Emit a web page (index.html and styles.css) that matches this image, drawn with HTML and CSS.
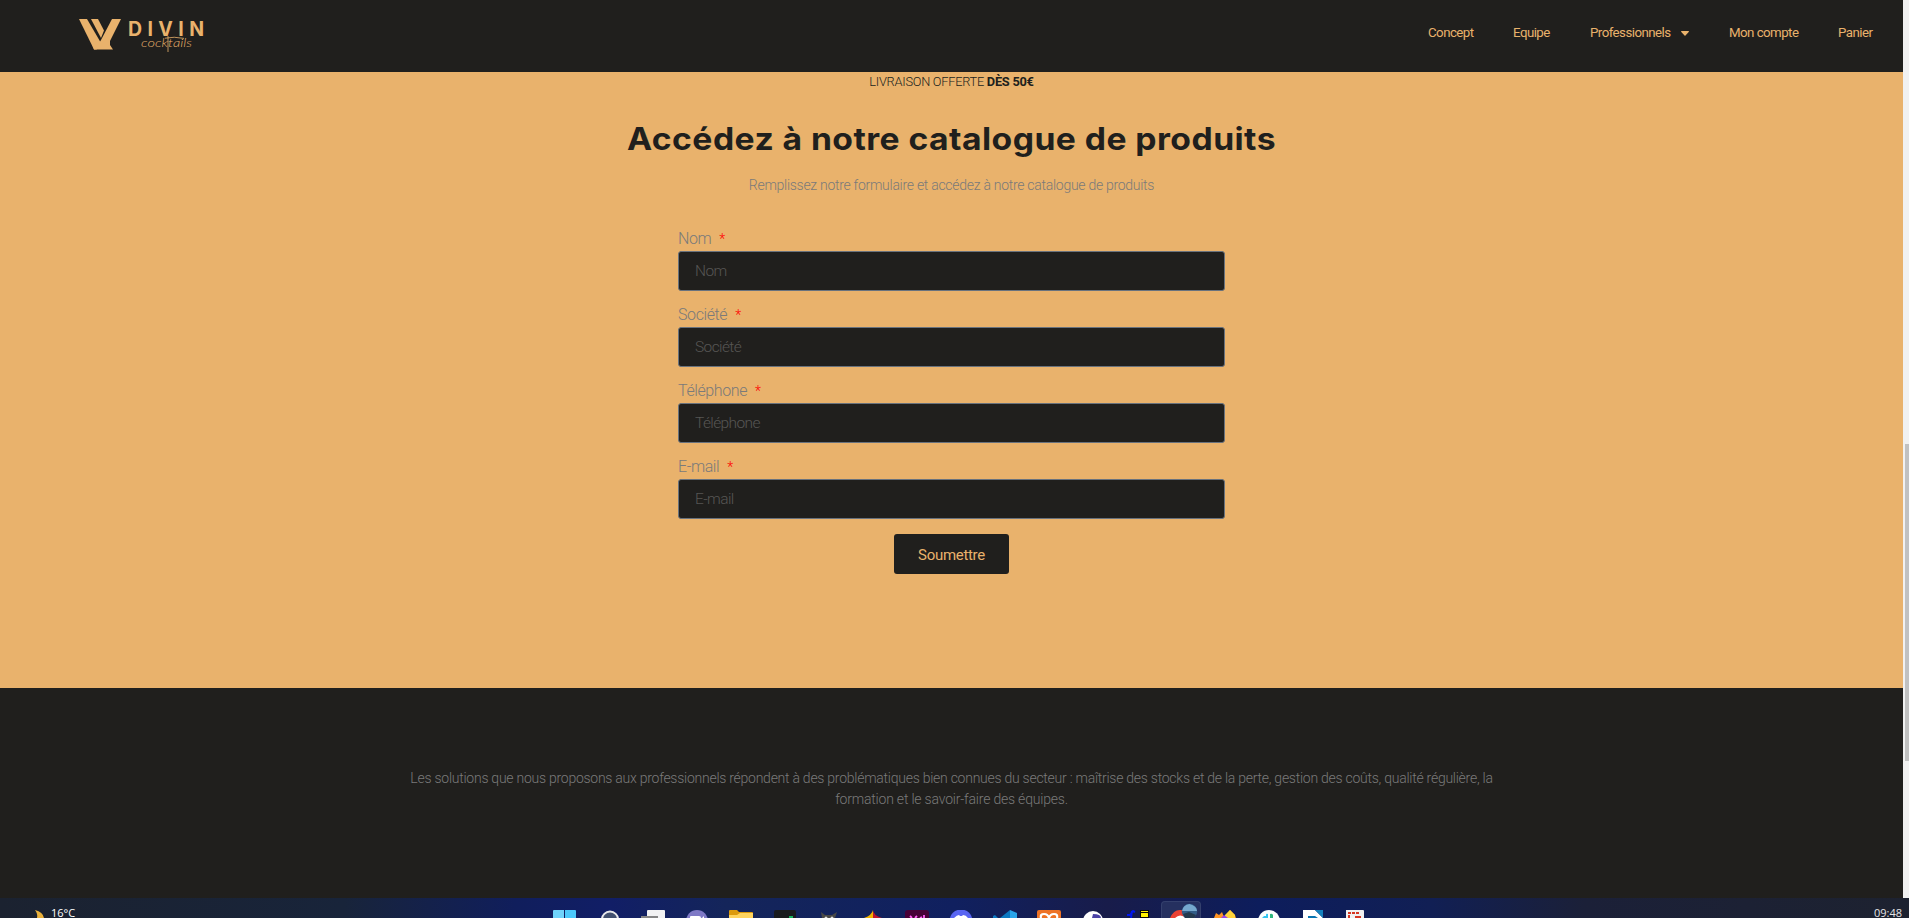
FILE: index.html
```html
<!DOCTYPE html>
<html lang="fr">
<head>
<meta charset="utf-8">
<title>Divin cocktails</title>
<link rel="stylesheet" href="styles.css">
</head>
<body>
<div class="browser">
  <div class="page">
    <header class="header">
      <svg class="logo" width="130" height="44" viewBox="0 0 130 44" fill="#e9b26c">
        <path d="M0 5H8L22 29V31L17.500 35.500H15Z"/>
        <path d="M12 5H19L25 16.500L22 24Z"/>
        <path d="M33 5H42L31 27V31L34 35.500H15L14 32L19 31L22 26Z"/>
        <text class="logo-name" x="49" y="22" textLength="76">DIVIN</text>
        <text class="logo-sub" x="62" y="32.500" textLength="51" lengthAdjust="spacingAndGlyphs">cocktails</text>
        <path d="M86 24.200Q95 22.200 105 24.400" fill="none" stroke="#e9b26c" stroke-width=".8"/>
        <path d="M89 22V38" fill="none" stroke="#e9b26c" stroke-width=".8"/>
      </svg>
      <nav class="nav">
        <a class="n1">Concept</a>
        <a class="n2">Equipe</a>
        <a class="n3"><span>Professionnels</span><svg width="8" height="5" viewBox="0 0 8 5"><path d="M.5 0H7.500Q8.300.4 7.700 1L4.500 4.600Q4 5 3.500 4.600L.3 1Q-.3.4.5 0Z" fill="#e9b26c"/></svg></a>
        <a class="n4">Mon compte</a>
        <a class="n5">Panier</a>
      </nav>
    </header>
    <main class="catalogue">
      <p class="shipping"><span>LIVRAISON OFFERTE</span> <b>DÈS 50€</b></p>
      <h1 class="title">Accédez à notre catalogue de produits</h1>
      <p class="intro">Remplissez notre formulaire et accédez à notre catalogue de produits</p>
      <form class="form">
        <label class="label"><span>Nom</span><i>*</i></label>
        <input class="field" placeholder="Nom">
        <label class="label"><span>Société</span><i>*</i></label>
        <input class="field" placeholder="Société">
        <label class="label"><span>Téléphone</span><i>*</i></label>
        <input class="field" placeholder="Téléphone">
        <label class="label"><span>E-mail</span><i>*</i></label>
        <input class="field" placeholder="E-mail">
        <button class="submit" type="button">Soumettre</button>
      </form>
    </main>
    <section class="solutions">
      <p class="line1">Les solutions que nous proposons aux professionnels répondent à des problématiques bien connues du secteur : maîtrise des stocks et de la perte, gestion des coûts, qualité régulière, la</p>
      <p class="line2">formation et le savoir-faire des équipes.</p>
    </section>
  </div>
  <div class="scrollbar"><div class="thumb"></div></div>
</div>
<footer class="taskbar">
  <div class="weather">
    <svg width="10" height="8" viewBox="0 0 10 8"><path d="M0 0Q8 2 9 8H2Q3 4 0 0Z" fill="#e9b13c"/></svg>
    <span>16°C</span>
  </div>
  <div class="apps">
    <svg viewBox="0 0 24 8"><path d="M0 1Q0 0 1 0H11V8H0Z" fill="#6fd3fb"/><path d="M12 0H22Q23 0 23 1V8H12Z" fill="#4cc8fa"/></svg>
    <svg viewBox="0 0 24 8"><circle cx="13" cy="9.500" r="8" fill="#42506f" stroke="#e8e8ea" stroke-width="2"/></svg>
    <svg viewBox="0 0 24 8"><path d="M7 0H23Q24 0 24 1V8H6V1Q6 0 7 0Z" fill="#f2f2f3"/><path d="M0 6H17V8H0Z" fill="#858585"/></svg>
    <svg viewBox="0 0 24 8"><circle cx="12" cy="11" r="11" fill="#7e79c6"/><path d="M5 8V7Q5 6 6 6H14Q16 6 16 8Z" fill="#fff"/><path d="M17 8L19 6V8Z" fill="#fff"/></svg>
    <svg viewBox="0 0 24 8"><path d="M0 8V1Q0 0 1 0H8L10 2H23Q24 2 24 3V8Z" fill="#dc9a0c"/><path d="M0 5H8L11 3H24V8H0Z" fill="#ffd45e"/></svg>
    <svg viewBox="0 0 24 8"><path d="M1 2Q1 0 3 0H21Q23 0 23 2V8H1Z" fill="#191b1d"/><path d="M16 8V6H20V8Z" fill="#19b25d"/></svg>
    <svg viewBox="0 0 24 8"><path d="M4 2L8 5H15L20 2L18 8H5Z" fill="#484846"/><circle cx="9" cy="8" r="1.500" fill="#ddd"/><circle cx="15" cy="8" r="1.500" fill="#ddd"/></svg>
    <svg viewBox="0 0 24 8"><path d="M12 0Q11 5 3 8H12Z" fill="#f3b400"/><path d="M12 0Q12 5 21 8H12Z" fill="#bd172e"/></svg>
    <svg viewBox="0 0 24 8"><path d="M0 3Q0 0 3 0H21Q24 0 24 3V8H0Z" fill="#470137"/><path d="M5 6L7 8M12 6L10 8M19 5V8M15 8L17 7" stroke="#ff61f6" stroke-width="1.800"/></svg>
    <svg viewBox="0 0 24 8"><circle cx="12" cy="11" r="11.500" fill="#5865f2"/><path d="M5 8Q8 5 10 5L11 6H13L14 5Q17 5 19 8Z" fill="#fff"/></svg>
    <svg viewBox="0 0 24 8"><path d="M7 8L17 0L19 8Z" fill="#0c78c1"/><path d="M17 0L24 3V8H17Z" fill="#2aa5ea"/><path d="M0 6L2 5L5 8H0Z" fill="#0c78c1"/></svg>
    <svg viewBox="0 0 24 8"><path d="M0 2Q0 0 2 0H22Q24 0 24 2V8H0Z" fill="#ee7325"/><path d="M4 8Q3 4 7 4Q11 4 12 8Q13 4 17 4Q21 4 20 8" fill="none" stroke="#fff" stroke-width="2.200"/></svg>
    <svg viewBox="0 0 24 8"><circle cx="12" cy="11" r="10" fill="#fff"/><path d="M12 4Q20 4 20 8H11Z" fill="#4b42a5"/></svg>
    <svg viewBox="0 0 24 8"><path d="M2 5H5L8 1L10 2M7 1L6 8" stroke="#0016ee" stroke-width="2" fill="none"/><path d="M15 0H24V8H15Z" fill="#050505"/><path d="M16 1H23V2H16ZM16 3H23V7H16Z" fill="#fff100"/></svg>
    <span class="active-app"><svg viewBox="0 0 40 17"><path d="M9 17Q13 8 20 9Q28 10 30 17Z" fill="#e94133"/><path d="M14 17Q19 12 25 17Z" fill="#fff"/><circle cx="28.500" cy="10.500" r="7.700" fill="#315c87"/><path d="M21 10H36Q36 5 28.500 3Q22 4 21 10Z" fill="#76a8cd"/><path d="M22 13L28 11L35 14L33 17H24Z" fill="#23394d"/></svg></span>
    <svg viewBox="0 0 24 8"><path d="M1 8L3 3L6 5L9 2L11 7L17 0L22 5L23 8Z" fill="#ff9524"/><path d="M12 5L17 0L22 5V8H12Z" fill="#ffd43a"/><path d="M8 8L11 5L15 8Z" fill="#9b45e9"/></svg>
    <svg viewBox="0 0 24 8"><circle cx="12" cy="11" r="11" fill="#fff"/><path d="M9 8V5Q9 3 11 4V8Z" fill="#36c5f0"/><path d="M13 8V4Q15 3 16 5V8Z" fill="#2eb67d"/><path d="M5 8H10V6H7Z" fill="#36c5f0"/></svg>
    <svg viewBox="0 0 24 8"><path d="M2 0H14L22 8H2Z" fill="#fff"/><path d="M14 0H22V8Z" fill="#1482be"/><path d="M7 8V6H14L17 8Z" fill="#0874b0"/></svg>
    <svg viewBox="0 0 24 8"><path d="M1 0H18Q19 0 19 1V8H1Z" fill="#f1f1f1"/><path d="M4 8V3H13V5" stroke="#d63622" stroke-width="2" stroke-dasharray="3 1" fill="none"/><path d="M10 6H16V8H10Z" fill="#d63622"/></svg>
  </div>
  <time class="clock">09:48</time>
</footer>
</body>
</html>
```
FILE: styles.css
```css
* { box-sizing: border-box; margin: 0; padding: 0; }
body { width: 1909px; height: 918px; overflow: hidden; font-family: Roboto, sans-serif; background: #201f1d; }
.browser { display: flex; height: 898px; }
.page { width: 1903px; }
.header { height: 72px; background: #201f1d; display: flex; justify-content: space-between; padding: 14px 30px 0 79px; }
.logo-name { font: 700 19.500px Inter, sans-serif; }
.logo-sub { font: italic 300 12px Lato, sans-serif; }
.nav { display: flex; gap: 40px; height: 38px; align-items: center; font-size: 13.300px; line-height: 20px; color: #e9b26c; letter-spacing: -.55px; }
.nav a { display: flex; align-items: center; white-space: nowrap; }
.n1 { width: 45px; }
.n2 { width: 37px; }
.n3 { width: 99px; gap: 10px; }
.n4 { width: 69px; }
.n5 { width: 35px; }
.n3 span { width: 81px; }
.catalogue { height: 616px; background: #e9b26c; display: flex; flex-direction: column; align-items: center; }
.shipping { height: 20px; line-height: 20px; font-size: 12.800px; font-weight: 350; color: #201f1d; letter-spacing: -.25px; }
.shipping b { font-weight: 700; }
.title { margin-top: 27px; font: 700 31px/40px Inter, sans-serif; color: #201f1d; white-space: nowrap; letter-spacing: .4px; transform: scaleX(1.087); }
.intro { margin-top: 16px; line-height: 21px; font-size: 14px; font-weight: 350; color: #7a7a7a; letter-spacing: -.28px; }
.form { width: 547px; margin-top: 31px; display: flex; flex-direction: column; }
.label { height: 24px; display: flex; gap: 8px; font-size: 16px; font-weight: 350; line-height: 24px; color: #7a7a7a; letter-spacing: -.4px; }
.label i { font-style: normal; color: #f00; font-size: 14px; }
.field { width: 547px; height: 40px; margin-bottom: 12px; padding: 0 16px; border: 1px solid #69727d; border-radius: 3px; background: #201f1d; font: 350 15.500px Roboto, sans-serif; letter-spacing: -.6px; }
.field::placeholder { color: #575654; opacity: 1; }
.submit { align-self: center; width: 115px; height: 40px; margin-top: 3px; padding-top: 2px; border: 0; border-radius: 3px; background: #201f1d; color: #e9b26c; font: 400 15px Roboto, sans-serif; letter-spacing: -.3px; }
.solutions { padding-top: 80px; text-align: center; font-size: 14px; font-weight: 350; line-height: 21px; color: #7a7a7a; white-space: nowrap; }
.line1 { letter-spacing: -.257px; }
.line2 { letter-spacing: -.2px; }
.scrollbar { width: 6px; padding: 444px 0 0 2px; background: #f1f1f1; }
.thumb { height: 317px; background: #c1c1c1; }
.taskbar { height: 20px; display: flex; justify-content: space-between; overflow: hidden; background: linear-gradient(90deg, #1b2230 0, #18243a 18%, #101e5c 27%, #111e66 32%, #14255a 38%, #10205f 50%, #181c4a 58%, #0d1d5c 66%, #111f54 75%, #1b2038 83%, #1d2230 100%); }
.weather { width: 553px; padding: 6px 0 0 35px; display: flex; gap: 6px; }
.weather svg { margin-top: 6px; }
.weather span { font: 11px/18px "Open Sans", sans-serif; color: #fff; }
.apps { width: 812px; display: flex; gap: 20px; padding-top: 12px; }
.apps > svg { width: 24px; height: 8px; flex: none; }
.active-app { width: 40px; height: 17px; margin: -9px -8px 0; flex: none; border: 1px solid #34406d; border-bottom: 0; border-radius: 4px 4px 0 0; background: #25305f; }
.active-app svg { display: block; width: 40px; height: 17px; margin: -1px; }
.clock { width: 544px; padding: 6px 7px 0 0; text-align: right; font: 11px/18px "Open Sans", sans-serif; color: #e4e4e6; }
```
